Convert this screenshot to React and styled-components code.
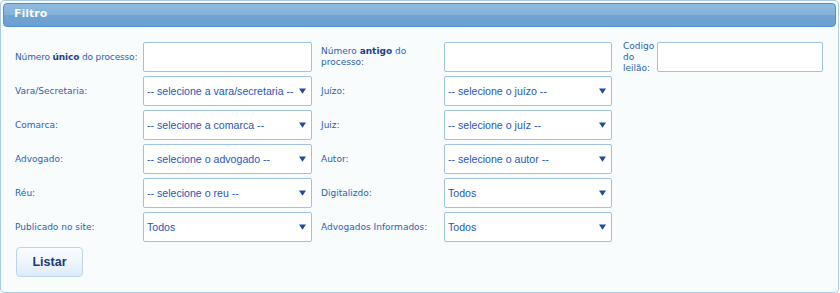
import React from "react";
import styled, { createGlobalStyle } from "styled-components";

const GlobalStyle = createGlobalStyle`
  html, body {
    margin: 0;
    padding: 0;
    background: #ffffff;
  }
  body {
    font-family: "DejaVu Sans", Verdana, sans-serif;
  }
`;

// linhas do filtro: cada linha tem ate 3 campos (rotulo + caixa)
const linhas = [
  [
    { rotulo: ["Número ", <b key="b">único</b>, " do processo:"], tipo: "texto", linhaUnica: true },
    { rotulo: ["Número ", <b key="b">antigo</b>, " do processo:"], tipo: "texto" },
    { rotulo: "Codigo do leilão:", tipo: "texto", estreito: true },
  ],
  [
    { rotulo: "Vara/Secretaria:", tipo: "select", valor: "-- selecione a vara/secretaria --" },
    { rotulo: "Juízo:", tipo: "select", valor: "-- selecione o juízo --" },
  ],
  [
    { rotulo: "Comarca:", tipo: "select", valor: "-- selecione a comarca --" },
    { rotulo: "Juiz:", tipo: "select", valor: "-- selecione o juíz --" },
  ],
  [
    { rotulo: "Advogado:", tipo: "select", valor: "-- selecione o advogado --" },
    { rotulo: "Autor:", tipo: "select", valor: "-- selecione o autor --" },
  ],
  [
    { rotulo: "Réu:", tipo: "select", valor: "-- selecione o reu --" },
    { rotulo: "Digitalizdo:", tipo: "select", valor: "Todos" },
  ],
  [
    { rotulo: "Publicado no site:", tipo: "select", valor: "Todos" },
    { rotulo: "Advogados Informados:", tipo: "select", valor: "Todos" },
  ],
];

export default class App extends React.Component {
  render() {
    const campos = [];
    linhas.forEach((linha, i) => {
      linha.forEach((campo, j) => {
        campos.push(
          <Rotulo
            key={"r" + i + j}
            coluna={j}
            estreito={campo.estreito}
            linhaUnica={campo.linhaUnica}
          >
            <span>{campo.rotulo}</span>
          </Rotulo>
        );
        if (campo.tipo === "texto") {
          campos.push(<CaixaTexto key={"c" + i + j} type="text" />);
        } else {
          campos.push(
            <CaixaSelect key={"c" + i + j}>
              <span>{campo.valor}</span>
              <Seta viewBox="0 0 8 6">
                <path d="M0 0 L8 0 L4 6 Z" fill="#1f4d9c" />
              </Seta>
            </CaixaSelect>
          );
        }
      });
      if (linha.length < 3) {
        campos.push(<Vazio key={"v" + i} />);
      }
    });

    return (
      <Painel>
        <GlobalStyle />
        <Cabecalho>Filtro</Cabecalho>
        <Formulario>{campos}</Formulario>
        <Rodape>
          <BotaoListar>Listar</BotaoListar>
        </Rodape>
      </Painel>
    );
  }
}

const Painel = styled.div`
  box-sizing: border-box;
  width: 839px;
  height: 293px;
  border: 1px solid #a9cbe6;
  border-radius: 4px;
  background: #f9fcfd;
  padding: 2px 2px 0 2px;
`;

const Cabecalho = styled.div`
  height: 22px;
  border: 1px solid #4f8fcb;
  border-radius: 4px;
  background: linear-gradient(to bottom, #8fbae0 0%, #84b2db 50%, #6fa3d2 51%, #6ba1d1 100%);
  color: #ffffff;
  font-family: Tahoma, "DejaVu Sans", Verdana, sans-serif;
  font-size: 11px;
  font-weight: bold;
  line-height: 20px;
  padding-left: 10px;
  text-shadow: 0 0 1px #5a8fc4;
`;

const Formulario = styled.div`
  display: grid;
  grid-template-columns: 128px 169px 132px 168px 45px 166px;
  grid-auto-rows: 30px;
  row-gap: 4px;
  padding: 15px 0 0 12px;
`;

const Rotulo = styled.div`
  display: flex;
  align-items: center;
  padding-left: ${(p) => (p.coluna === 0 ? 0 : p.coluna === 1 ? 9 : 11)}px;
  padding-right: ${(p) => (p.estreito || p.linhaUnica ? 0 : 6)}px;
  white-space: ${(p) => (p.linhaUnica ? "nowrap" : "normal")};
  letter-spacing: ${(p) => (p.linhaUnica ? "-0.15px" : "0")};
  color: #2c5fb0;
  font-family: "DejaVu Sans", Verdana, sans-serif;
  font-size: 9px;
  line-height: 11px;

  b {
    color: #1c3f86;
    font-weight: bold;
  }
`;

const CaixaTexto = styled.input`
  box-sizing: border-box;
  width: 100%;
  height: 30px;
  margin: 0;
  border: 1px solid #9dc2e2;
  border-radius: 2px;
  background: #ffffff;
  outline: none;
`;

const CaixaSelect = styled.div`
  box-sizing: border-box;
  height: 30px;
  display: flex;
  align-items: center;
  justify-content: space-between;
  padding: 0 5px 0 3px;
  border: 1px solid #9dc2e2;
  border-radius: 2px;
  background: #ffffff;
  color: #1f55c0;
  font-family: Tahoma, "Liberation Sans", Arial, sans-serif;
  font-size: 10.6px;
  white-space: nowrap;
  overflow: hidden;
`;

const Seta = styled.svg`
  width: 7px;
  height: 6px;
  flex-shrink: 0;
`;

const Vazio = styled.div`
  grid-column: span 2;
`;

const Rodape = styled.div`
  padding: 5px 0 0 13px;
`;

const BotaoListar = styled.button`
  width: 67px;
  height: 30px;
  border: 1px solid #bcd5ec;
  border-radius: 4px;
  background: linear-gradient(to bottom, #fbfdff 0%, #eef5fd 50%, #dcebfa 100%);
  color: #1a3b76;
  font-family: Tahoma, "Liberation Sans", Arial, sans-serif;
  font-size: 12.5px;
  font-weight: bold;
  cursor: pointer;
`;
